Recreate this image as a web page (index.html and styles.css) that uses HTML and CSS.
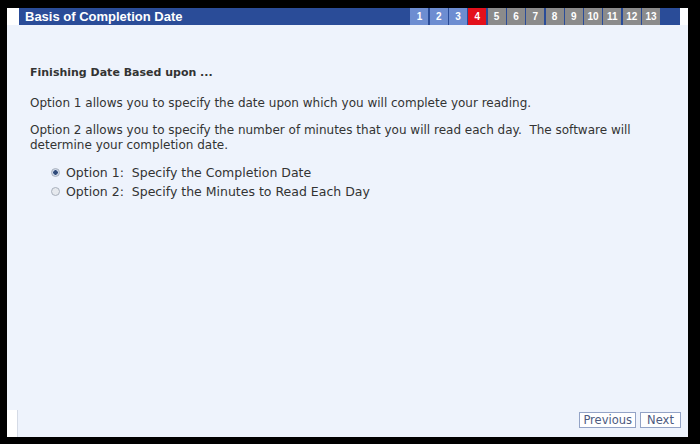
FILE: index.html
```html
<!DOCTYPE html>
<html lang="en">
<head>
  <meta charset="UTF-8">
  <title>Basis of Completion Date</title>
  <link rel="stylesheet" href="styles.css">
</head>
<body>

<div class="frame">
  <!-- HEADER BAR -->
  <div class="header">
    <div class="header-edge"></div>
    <div class="header-bar">
      <div class="title">Basis of Completion Date</div>
      <div class="steps">
        <span class="step done">1</span>
        <span class="step done">2</span>
        <span class="step done">3</span>
        <span class="step current">4</span>
        <span class="step">5</span>
        <span class="step">6</span>
        <span class="step">7</span>
        <span class="step">8</span>
        <span class="step">9</span>
        <span class="step">10</span>
        <span class="step">11</span>
        <span class="step">12</span>
        <span class="step">13</span>
      </div>
    </div>
    <div class="header-edge right"></div>
  </div>

  <!-- CONTENT -->
  <div class="content">
    <h3>Finishing Date Based upon ...</h3>
    <p>Option 1 allows you to specify the date upon which you will complete your reading.</p>
    <p class="last">Option 2 allows you to specify the number of minutes that you will read each day.&nbsp; The software will determine your completion date.</p>

    <div class="options">
      <label class="option"><input type="radio" name="basis" checked> Option 1:&nbsp; Specify the Completion Date</label>
      <label class="option"><input type="radio" name="basis"> Option 2:&nbsp; Specify the Minutes to Read Each Day</label>
    </div>
  </div>

  <!-- BUTTONS -->
  <div class="footer">
    <div class="footer-edge"></div>
    <div class="button-group">
      <button type="button">Previous</button>
      <button type="button">Next</button>
    </div>
  </div>
</div>

</body>
</html>
```

FILE: styles.css
```css
html, body {
  margin: 0;
  padding: 0;
  background-color: #000;
}

body {
  padding: 8px 12px 7px 7px;
  height: 444px;
  box-sizing: border-box;
}

.frame {
  height: 100%;
  background-color: #eef3fc;
  display: flex;
  flex-direction: column;
  font-family: "DejaVu Sans", Verdana, sans-serif;
  color: #333;
}

.header {
  display: flex;
  height: 17px;
}

.header-edge {
  width: 12px;
  background-color: #fff;
}

.header-edge.right {
  width: 8px;
  background-color: #fbfcfe;
}

.header-bar {
  flex: 1;
  display: flex;
  justify-content: space-between;
  background-color: #2a4c98;
}

.title {
  font-family: "Liberation Sans", Arial, sans-serif;
  font-weight: bold;
  font-size: 13px;
  line-height: 17px;
  color: #fff;
  padding-left: 6px;
}

.steps {
  display: flex;
  gap: 1.3px;
  margin-right: 20px;
}

.step {
  width: 18px;
  background-color: #8b8b8b;
  color: #fff;
  font-family: "Liberation Sans", Arial, sans-serif;
  font-weight: bold;
  font-size: 10px;
  line-height: 17px;
  text-align: center;
}

.step.done {
  background-color: #6d8dd1;
}

.step.current {
  background-color: #e3101b;
}

.content {
  flex: 1;
  padding: 0 20px 0 23px;
}

h3 {
  font-size: 11px;
  font-weight: bold;
  margin: 41px 0 17px 0;
  color: #333;
}

p {
  font-size: 12px;
  line-height: 15px;
  margin: 0 0 12px 0;
}

p.last {
  margin-bottom: 10px;
}

.options {
  padding-left: 21px;
  font-size: 12.5px;
}

.option {
  display: flex;
  align-items: center;
  gap: 6px;
  height: 19px;
}

.option input {
  appearance: none;
  width: 9px;
  height: 9px;
  margin: 0;
  border: 1px solid #a8b0bc;
  border-radius: 50%;
  background-color: #e6e9ee;
}

.option input:checked {
  background: radial-gradient(circle, #2f4a7a 0 2px, #cfd9ea 2.5px);
}

.footer {
  display: flex;
  height: 27px;
}

.footer-edge {
  width: 10px;
  background-color: #fff;
  border-right: 1px solid #d5dbe6;
}

.button-group {
  flex: 1;
  display: flex;
  justify-content: flex-end;
  align-items: flex-start;
  gap: 4px;
  padding: 2px 7px 0 0;
}

button {
  font-family: "DejaVu Sans", Verdana, sans-serif;
  font-size: 11.5px;
  color: #4c5a80;
  background-color: #fff;
  border: 1px solid #93a3c6;
  height: 16px;
  min-width: 41px;
  padding: 0 3px;
  line-height: 14px;
}
```
